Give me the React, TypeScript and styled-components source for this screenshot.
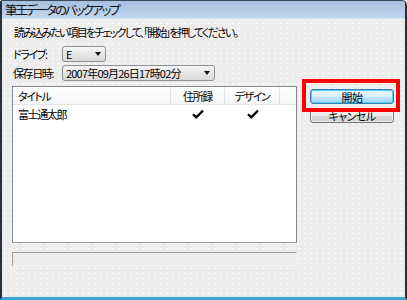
import React from "react";
import styled, { createGlobalStyle } from "styled-components";

const Global = createGlobalStyle`
  html, body { margin: 0; padding: 0; background: #ffffff; }
  body { font-family: "Noto Sans CJK JP", "Noto Sans", sans-serif; color: #000; }
  * { box-sizing: border-box; }
`;

const Window = styled.div`
  position: relative;
  width: 407px;
  height: 300px;
  display: flex;
  flex-direction: column;
  background-color: #ededed;
  background-image: radial-gradient(circle, rgba(255,255,255,0.9) 0.6px, transparent 0.8px);
  background-size: 6px 5px;
  border-left: 2px solid #25313d;
  border-right: 2px solid #25313d;
  border-top: 1px solid #3b4a5a;
  border-bottom: 3px solid #3aa7d2;
  border-top-right-radius: 5px;
  border-top-left-radius: 2px;
  overflow: hidden;
`;

const TitleBar = styled.div`
  height: 18px;
  display: flex;
  align-items: center;
  padding-left: 3px;
  background: linear-gradient(#a6bfe0, #c3d6ee);
  border-bottom: 1px solid #d6e2f0;
  font-size: 12.5px;
  letter-spacing: -2px;
  font-feature-settings: "palt";
  color: #111;
`;

const Body = styled.div`
  display: flex;
  flex-direction: column;
  padding: 6px 0 0 10px;
  font-size: 11px;
  font-feature-settings: "palt";
  letter-spacing: -1.4px;
`;

const Instruction = styled.div`
  height: 14px;
  line-height: 14px;
  padding-left: 2px;
  letter-spacing: -1.8px;
`;

const FieldRow = styled.div<{ $top: number }>`
  display: flex;
  align-items: center;
  height: 16px;
  margin-top: ${(p) => p.$top}px;
`;

const Label = styled.div`
  width: 50px;
  padding-left: 1px;
`;

const Combo = styled.div<{ $w: number }>`
  width: ${(p) => p.$w}px;
  height: 16px;
  display: flex;
  align-items: center;
  justify-content: space-between;
  padding: 0 4px 0 3px;
  border: 1px solid #8d8f92;
  border-radius: 3px;
  background: linear-gradient(#f7f7f7, #e6e6e6 50%, #dadada);
  letter-spacing: -0.8px;
`;

const Arrow = styled.span`
  width: 0;
  height: 0;
  border-left: 3.5px solid transparent;
  border-right: 3.5px solid transparent;
  border-top: 4px solid #111;
`;

const Main = styled.div`
  display: flex;
  margin-top: 5px;
`;

const LeftCol = styled.div`
  width: 285px;
  display: flex;
  flex-direction: column;
`;

const ListBox = styled.div`
  height: 157px;
  background: #fff;
  border: 1px solid #828790;
  border-bottom-color: #9a9a9a;
`;

const Grid = styled.div<{ $header?: boolean }>`
  display: grid;
  grid-template-columns: 158px 54px 55px 1fr;
  height: 18px;
  ${(p) =>
    p.$header
      ? `background: linear-gradient(#ffffff, #f4f5f7); border-bottom: 1px solid #e3e4e6;`
      : ``}
`;

const Cell = styled.div<{ $center?: boolean; $sep?: boolean }>`
  display: flex;
  align-items: center;
  justify-content: ${(p) => (p.$center ? "center" : "flex-start")};
  padding-left: ${(p) => (p.$center ? 0 : 5)}px;
  border-right: ${(p) => (p.$sep ? "1px solid #e2e3e5" : "none")};
`;

const Progress = styled.div`
  height: 14px;
  margin-top: 9px;
  border-top: 1px solid #9c9c9c;
  border-left: 1px solid #9c9c9c;
  border-right: 1px dotted #ffffff;
  border-bottom: 1px dotted #ffffff;
  background: #ececec;
`;

const RightCol = styled.div`
  display: flex;
  flex-direction: column;
  gap: 4px;
  margin-left: 13px;
  padding-top: 3px;
`;

const Button = styled.div<{ $primary?: boolean }>`
  width: 84px;
  height: 15px;
  display: flex;
  align-items: center;
  justify-content: center;
  border-radius: 3px;
  border: 1px solid ${(p) => (p.$primary ? "#3c7fb1" : "#707070")};
  background: ${(p) =>
    p.$primary
      ? "linear-gradient(#eaf6fd, #d9f0fc 50%, #bee6fd 51%, #a7d9f5)"
      : "linear-gradient(#f2f2f2, #ebebeb 50%, #dddddd 51%, #cfcfcf)"};
  box-shadow: inset 0 0 0 1px ${(p) => (p.$primary ? "#48d1f8" : "rgba(255,255,255,0.6)")};
  font-size: 11px;
  letter-spacing: -0.5px;
`;

const Highlight = styled.div`
  position: absolute;
  left: 300px;
  top: 78px;
  width: 98px;
  height: 33px;
  border: 4px solid #ff0000;
`;

const Check = () => (
  <svg width="12" height="10" viewBox="0 0 12 10">
    <path d="M1 5.2 L4.2 8.4 L11 1.6" fill="none" stroke="#000" strokeWidth="2.2" strokeLinejoin="miter" />
  </svg>
);

export default function App() {
  return (
    <>
      <Global />
      <Window>
        <TitleBar>筆王データのバックアップ</TitleBar>
        <Body>
          <Instruction>読み込みたい項目をチェックして、「開始」を押してください。</Instruction>
          <FieldRow $top={7}>
            <Label>ドライブ:</Label>
            <Combo $w={44}>
              <span>E</span>
              <Arrow />
            </Combo>
          </FieldRow>
          <FieldRow $top={3}>
            <Label>保存日時:</Label>
            <Combo $w={153}>
              <span>2007年09月26日17時02分</span>
              <Arrow />
            </Combo>
          </FieldRow>
          <Main>
            <LeftCol>
              <ListBox>
                <Grid $header>
                  <Cell $sep>タイトル</Cell>
                  <Cell $center $sep>住所録</Cell>
                  <Cell $center $sep>デザイン</Cell>
                  <Cell />
                </Grid>
                <Grid>
                  <Cell>富士通太郎</Cell>
                  <Cell $center><Check /></Cell>
                  <Cell $center><Check /></Cell>
                  <Cell />
                </Grid>
              </ListBox>
              <Progress />
            </LeftCol>
            <RightCol>
              <Button $primary>開始</Button>
              <Button>キャンセル</Button>
            </RightCol>
          </Main>
        </Body>
        <Highlight />
      </Window>
    </>
  );
}
